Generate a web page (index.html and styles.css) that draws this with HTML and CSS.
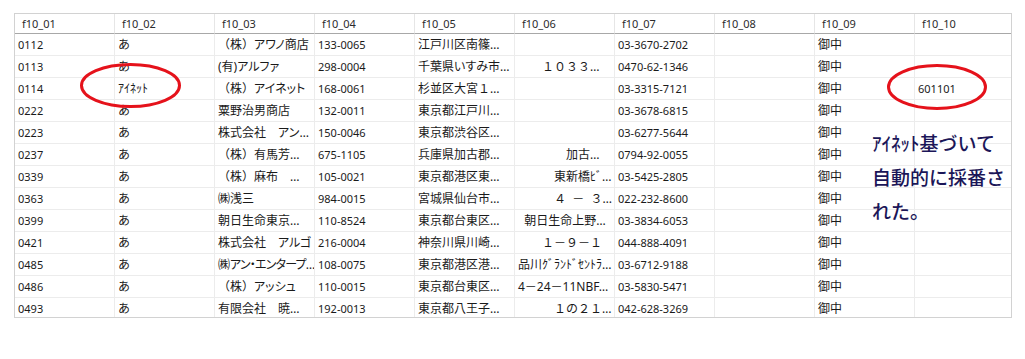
FILE: index.html
```html
<!DOCTYPE html>
<html lang="ja">
<head>
<meta charset="utf-8">
<title>f10 grid</title>
<link rel="stylesheet" href="styles.css">
</head>
<body>
<div class="page">
  <div class="grid-wrap">
    <table class="grid">
      <thead>
        <tr>
          <th>f10_01</th><th>f10_02</th><th>f10_03</th><th>f10_04</th><th>f10_05</th>
          <th>f10_06</th><th>f10_07</th><th>f10_08</th><th>f10_09</th><th>f10_10</th>
        </tr>
      </thead>
      <tbody>
        <tr><td>0112</td><td>あ</td><td>（株）<span class="k">アワノ</span>商店</td><td>133-0065</td><td>江戸川区南篠…</td><td></td><td>03-3670-2702</td><td></td><td>御中</td><td></td></tr>
        <tr><td>0113</td><td>あ</td><td>(有)<span class="k">アルファ</span></td><td>298-0004</td><td>千葉県<span class="k">いすみ</span>市…</td><td>　　１０３３…</td><td>0470-62-1346</td><td></td><td>御中</td><td></td></tr>
        <tr><td>0114</td><td>ｱｲﾈｯﾄ</td><td>（株）<span class="k">アイネット</span></td><td>168-0061</td><td>杉並区大宮１…</td><td></td><td>03-3315-7121</td><td></td><td>御中</td><td>601101</td></tr>
        <tr><td>0222</td><td>あ</td><td>粟野治男商店</td><td>132-0011</td><td>東京都江戸川…</td><td></td><td>03-3678-6815</td><td></td><td>御中</td><td></td></tr>
        <tr><td>0223</td><td>あ</td><td>株式会社　<span class="k">アン</span>…</td><td>150-0046</td><td>東京都渋谷区…</td><td></td><td>03-6277-5644</td><td></td><td>御中</td><td></td></tr>
        <tr><td>0237</td><td>あ</td><td>（株）有馬芳…</td><td>675-1105</td><td>兵庫県加古郡…</td><td>　　　　加古…</td><td>0794-92-0055</td><td></td><td>御中</td><td></td></tr>
        <tr><td>0339</td><td>あ</td><td>（株）麻布　…</td><td>105-0021</td><td>東京都港区東…</td><td>　　　東新橋ﾋﾞ…</td><td>03-5425-2805</td><td></td><td>御中</td><td></td></tr>
        <tr><td>0363</td><td>あ</td><td>㈱浅三</td><td>984-0015</td><td>宮城県仙台市…</td><td>　　　４  －  ３…</td><td>022-232-8600</td><td></td><td>御中</td><td></td></tr>
        <tr><td>0399</td><td>あ</td><td>朝日生命東京…</td><td>110-8524</td><td>東京都台東区…</td><td>  朝日生命上野…</td><td>03-3834-6053</td><td></td><td>御中</td><td></td></tr>
        <tr><td>0421</td><td>あ</td><td>株式会社　<span class="k">アルゴ</span></td><td>216-0004</td><td>神奈川県川崎…</td><td>　　１－９－１</td><td>044-888-4091</td><td></td><td>御中</td><td></td></tr>
        <tr><td>0485</td><td>あ</td><td>㈱<span class="k tight">アン・エンタープ</span>…</td><td>108-0075</td><td>東京都港区港…</td><td>品川ｸﾞﾗﾝﾄﾞｾﾝﾄﾗ…</td><td>03-6712-9188</td><td></td><td>御中</td><td></td></tr>
        <tr><td>0486</td><td>あ</td><td>（株）<span class="k">アッシュ</span></td><td>110-0015</td><td>東京都台東区…</td><td>4－24－11NBF…</td><td>03-5830-5471</td><td></td><td>御中</td><td></td></tr>
        <tr><td>0493</td><td>あ</td><td>有限会社　暁…</td><td>192-0013</td><td>東京都八王子…</td><td>　　　１の２１…</td><td>042-628-3269</td><td></td><td>御中</td><td></td></tr>
      </tbody>
    </table>
  </div>

  <svg class="marks" width="1025" height="359" viewBox="0 0 1025 359" aria-hidden="true">
    <ellipse cx="130.5" cy="85.5" rx="49" ry="21" fill="none" stroke="#e5121b" stroke-width="3"/>
    <ellipse cx="937" cy="87" rx="48.5" ry="21.5" fill="none" stroke="#e5121b" stroke-width="3"/>
  </svg>

  <p class="note">ｱｲﾈｯﾄ基づいて<br>自動的に採番さ<br>れた。</p>
</div>
</body>
</html>
```

FILE: styles.css
```css
html, body {
  margin: 0;
  padding: 0;
  background: #ffffff;
}

.page {
  position: relative;
  width: 1025px;
  height: 359px;
  overflow: hidden;
  padding-top: 13px;
  box-sizing: border-box;
}

.grid-wrap {
  margin-left: 14px;
  width: 998px;
  height: 305px;
  border: 1px solid #d2d2d2;
  box-sizing: border-box;
  overflow: hidden;
}

.grid {
  width: 1000px;
  table-layout: fixed;
  border-collapse: separate;
  border-spacing: 0;
  font-family: "Noto Sans", "Noto Sans CJK JP", sans-serif;
  font-size: 12px;
  color: #1a1a1a;
}

.grid th,
.grid td {
  width: 100px;
  box-sizing: border-box;
  padding: 0;
  border-right: 1px solid #ececec;
  overflow: hidden;
  white-space: pre;
  text-align: left;
  font-weight: normal;
}

.grid th {
  height: 20px;
  line-height: 19px;
  padding: 0 7px;
  border-bottom: 1px solid #a8a8a8;
  border-right-color: #e6e6e6;
  font-size: 11px;
  color: #2b2b2b;
}

.grid td {
  height: 22px;
  line-height: 21px;
  padding: 0 3px;
  border-bottom: 1px solid #ececec;
}

.grid td:nth-child(1),
.grid td:nth-child(4),
.grid td:nth-child(7),
.grid td:nth-child(10) {
  font-size: 11px;
}

.k {
  font-feature-settings: "palt";
}

.tight {
  letter-spacing: -0.8px;
}

.marks {
  position: absolute;
  left: 0;
  top: 0;
  pointer-events: none;
}

.note {
  position: absolute;
  left: 872px;
  top: 126px;
  margin: 0;
  font-family: "Noto Sans CJK JP", sans-serif;
  font-size: 19px;
  font-weight: 500;
  line-height: 34px;
  color: #1b1658;
  white-space: nowrap;
}
```
